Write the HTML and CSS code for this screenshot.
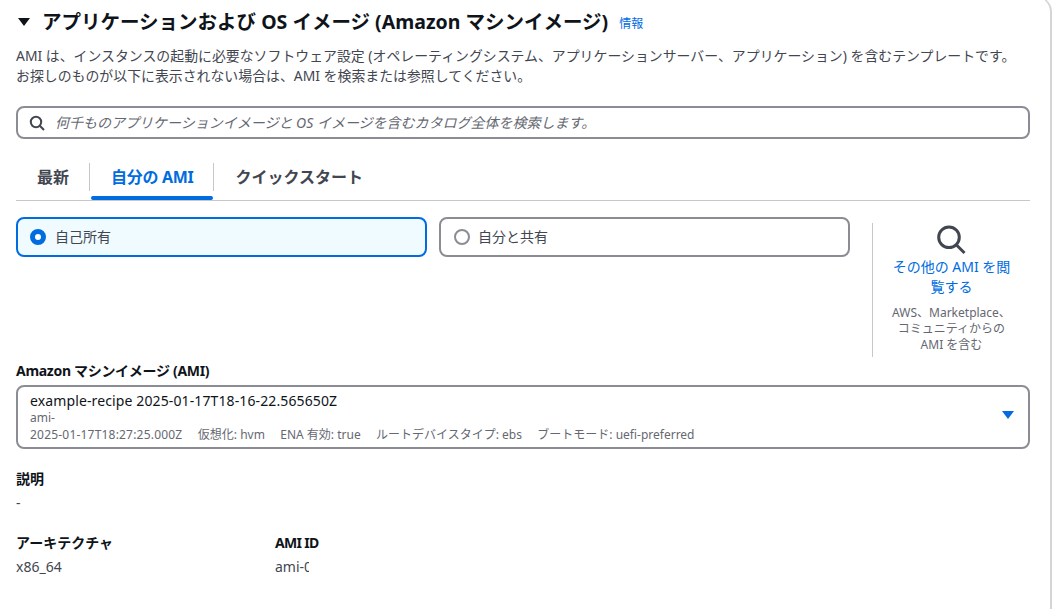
FILE: index.html
```html
<!DOCTYPE html>
<html lang="ja">
<head>
<meta charset="utf-8">
<title>AMI</title>
<link rel="stylesheet" href="styles.css">
</head>
<body>
<div class="page">
<main class="card">
  <header class="head">
    <svg class="caret" viewBox="0 0 12 8" width="12" height="8"><path d="M0 0h12L6 8z"/></svg>
    <h2 class="title">アプリケーションおよび OS イメージ (Amazon マシンイメージ)</h2>
    <a class="info">情報</a>
  </header>
  <p class="desc">AMI は、インスタンスの起動に必要なソフトウェア設定 (オペレーティングシステム、アプリケーションサーバー、アプリケーション) を含むテンプレートです。<br>お探しのものが以下に表示されない場合は、AMI を検索または参照してください。</p>
  <div class="search">
    <svg class="search-icon" viewBox="0 0 16 16" width="16" height="16"><circle cx="7" cy="7" r="5.2"/><path d="M10.8 10.8L15 15"/></svg>
    <span class="placeholder">何千ものアプリケーションイメージと OS イメージを含むカタログ全体を検索します。</span>
  </div>
  <nav class="tabs">
    <span class="tab tab-first">最新</span>
    <span class="tab tab-active">自分の AMI</span>
    <span class="tab tab-last">クイックスタート</span>
  </nav>
  <section class="owner">
    <div class="radios">
      <div class="radio radio-on"><span class="dot dot-on"></span>自己所有</div>
      <div class="radio radio-off"><span class="dot"></span>自分と共有</div>
    </div>
    <aside class="browse">
      <svg class="browse-icon" viewBox="0 0 30 30" width="30" height="30"><circle cx="12" cy="12.300" r="10.300"/><path d="M19.500 20L27.500 28"/></svg>
      <a class="browse-link">その他の AMI を閲覧する</a>
      <p class="browse-note">AWS、Marketplace、<br>コミュニティからの<br>AMI を含む</p>
    </aside>
  </section>
  <div class="label">Amazon マシンイメージ (AMI)</div>
  <div class="select">
    <div class="select-body">
      <div class="ami-name">example-recipe 2025-01-17T18-16-22.565650Z</div>
      <div class="ami-meta">ami-</div>
      <div class="ami-meta ami-tags"><span class="ami-date">2025-01-17T18:27:25.000Z</span><span>仮想化: hvm</span><span>ENA 有効: true</span><span>ルートデバイスタイプ: ebs</span><span>ブートモード: uefi-preferred</span></div>
    </div>
    <svg class="select-arrow" viewBox="0 0 12 8" width="12" height="8"><path d="M0 0h12L6 8z"/></svg>
  </div>
  <dl class="field field-desc">
    <dt>説明</dt>
    <dd>-</dd>
  </dl>
  <div class="field-row">
    <dl class="field field-arch"><dt>アーキテクチャ</dt><dd>x86_64</dd></dl>
    <dl class="field"><dt class="latin-dt">AMI ID</dt><dd class="clip">ami-0</dd></dl>
  </div>
</main>
</div>
</body>
</html>
```
FILE: styles.css
```css
* { box-sizing: border-box; }
html, body { margin: 0; background: #fff; }
body {
  font-family: "Noto Sans", "Noto Sans CJK JP", sans-serif;
  font-size: 14px;
  line-height: 20px;
  color: #0f141a;
}
.page { width: 1060px; height: 609px; overflow: hidden; padding-bottom: 1px; }
.card {
  width: 1052px;
  height: 640px;
  margin-top: -4px;
  padding: 4px 20px 0 16px;
  border-right: 2px solid #d5d5d8;
  border-top: 1px solid #d5d5d8;
  border-top-right-radius: 16px;
}
.head { display: flex; align-items: center; height: 42px; padding-bottom: 1px; }
.caret { margin: 0 12px 0 2px; fill: #0f141a; flex: none; }
.title { margin: 0; font-size: 19.5px; line-height: 24px; font-weight: 700; white-space: nowrap; }
.info { margin-left: 11px; font-size: 12px; color: #006ce0; padding-top: 4px; }
.desc { margin: 3px 0 0; font-size: 13.9px; color: #424650; white-space: nowrap; }
.search {
  display: flex; align-items: center; height: 33px; margin-top: 20px;
  border: 2px solid #8c8c94; border-radius: 8px; padding-left: 11px;
}
.search-icon { fill: none; stroke: #424650; stroke-width: 2; flex: none; }
.placeholder { margin-left: 10px; font-size: 14px; font-style: italic; color: #656871; white-space: nowrap; }
.tabs { display: flex; align-items: stretch; height: 47px; margin-top: 15px; border-bottom: 1px solid #c6c6cd; position: relative; padding-top: 9px; }
.tab { font-size: 16px; font-weight: 700; color: #424650; padding: 0 21px; height: 28px; display: flex; align-items: center; white-space: nowrap; }
.tab-first { padding-right: 20px; border-right: 1px solid #c6c6cd; }
.tab-active { color: #006ce0; padding-right: 20px; letter-spacing: -0.3px; border-right: 1px solid #c6c6cd; position: relative; }
.tab-active::after { content: ""; position: absolute; left: 1px; right: 0; bottom: -9px; height: 4px; background: #006ce0; border-radius: 2px; }
.owner { display: flex; height: 140px; margin-top: 16px; }
.radios { display: flex; gap: 12px; align-items: flex-start; }
.radio {
  display: flex; align-items: center; width: 411px; height: 40px; padding-left: 12px;
  border: 2px solid #8c8c94; border-radius: 8px; font-size: 14px; color: #424650;
}
.radio-on { border-color: #006ce0; background: #f0fbff; }
.radio-off { padding-left: 13px; }
.dot { width: 16px; height: 16px; border-radius: 50%; border: 2px solid #8c8c94; margin-right: 8px; flex: none; background: #fff; }
.dot-on { border: 5px solid #006ce0; margin-right: 9px; }
.browse {
  display: flex; flex-direction: column; align-items: center; width: 158px; height: 134px;
  margin: 6px 0 0 22px; padding: 2px 18px 0; border-left: 1px solid #c6c6cd; text-align: center;
}
.browse-icon { fill: none; stroke: #424650; stroke-width: 3; flex: none; }
.browse-link { margin-top: 2px; font-size: 14px; color: #006ce0; }
.browse-note { margin: 8px 0 0; font-size: 12px; line-height: 16px; color: #656871; white-space: nowrap; }
.label { font-size: 14px; font-weight: 700; line-height: 18px; margin-top: 5px; white-space: nowrap; letter-spacing: -0.3px; }
.select {
  display: flex; align-items: center; justify-content: space-between; height: 64px; margin-top: 5px;
  border: 2px solid #8c8c94; border-radius: 8px; padding: 0 14px 0 12px;
}
.select-body { padding-top: 1px; }
.ami-name { font-size: 14px; line-height: 17px; letter-spacing: 0.12px; }
.ami-meta { font-size: 12px; line-height: 17px; color: #656871; white-space: nowrap; }
.ami-tags { display: flex; gap: 15.4px; }
.ami-date { letter-spacing: 0.2px; }
.select-arrow { fill: #006ce0; flex: none; margin-top: -4px; }
.field { margin: 0; }
.field dt { font-size: 14px; font-weight: 700; line-height: 20px; }
.field dd { margin: 4px 0 0; font-size: 14px; line-height: 20px; color: #424650; }
.field .latin-dt { letter-spacing: -0.7px; }
.field-desc { margin-top: 20px; }
.field-row { display: flex; margin-top: 20px; }
.field-arch { width: 259px; }
.clip { width: 34px; overflow: hidden; white-space: nowrap; }
```
